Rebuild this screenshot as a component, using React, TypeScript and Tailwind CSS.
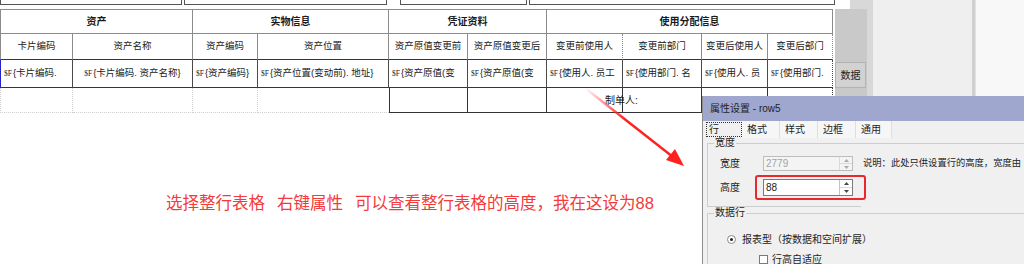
import React from 'react';

const cols = 'grid grid-cols-[73px_120px_65px_131px_79px_79px_76px_79px_66px_65px]';

const groups = [
  { name: '资产', span: 'col-span-2 border-l' },
  { name: '实物信息', span: 'col-span-2' },
  { name: '凭证资料', span: 'col-span-2' },
  { name: '使用分配信息', span: 'col-span-4' },
];

const heads = ['卡片编码', '资产名称', '资产编码', '资产位置', '资产原值变更前', '资产原值变更后', '变更前使用人', '变更前部门', '变更后使用人', '变更后部门'];

// 数据行里看得到的字段（截断部分保持截图样子）
const fields: { text: string; center?: boolean }[] = [
  { text: '卡片编码.' },
  { text: '卡片编码. 资产名称}', center: true },
  { text: '资产编码}' },
  { text: '资产位置(变动前). 地址}' },
  { text: '资产原值(变' },
  { text: '资产原值(变' },
  { text: '使用人. 员工' },
  { text: '使用部门. 名' },
  { text: '使用人. 员' },
  { text: '使用部门.' },
];

const TopStrip = () => (
  <div className="h-[9px] flex items-start">
    <div className="w-[182px] h-[5px] border-x border-b border-[#555]" />
    <div className="w-[203px] h-[5px] ml-[2px] border-x border-b border-[#555]" />
    <div className="w-[127px] h-[5px] ml-[13px] border-x border-b border-[#555]" />
    <div className="w-[306px] h-[5px] ml-[2px] border-x border-b border-[#555]" />
  </div>
);

const Table = () => (
  <div className={`${cols} w-[834px] text-[#1a1a1a]`}>
    {groups.map((g) => (
      <div
        key={g.name}
        className={`${g.span} h-[25px] border-t border-r border-b border-[#8c8c8c] flex items-center justify-center text-[10px] font-bold`}
      >
        {g.name}
      </div>
    ))}

    {heads.map((h, i) => (
      <div
        key={h}
        className={`h-[26px] border-r border-b border-r-[#8c8c8c] border-b-[#2323c8] flex items-center justify-center text-[9.5px] whitespace-nowrap overflow-hidden ${
          i === 0 ? 'border-l border-l-[#8c8c8c]' : ''
        } ${i === 6 || i === 9 ? '[border-right-style:dotted]' : ''}`}
      >
        {h}
      </div>
    ))}

    {fields.map((f, i) => (
      <div
        key={i}
        className={`h-[28px] border-r border-b border-r-[#4a4a4a] border-b-[#2323c8] flex items-center text-[9.5px] whitespace-nowrap overflow-hidden ${
          f.center ? 'justify-center' : 'pl-[3px]'
        } ${i === 0 ? 'border-l border-l-[#2323c8]' : ''} ${i === 9 ? '[border-right-style:dotted]' : ''}`}
      >
        <span className="text-[7.5px] font-['Liberation_Serif',serif] mr-[1px]">$F</span>
        {'{' + f.text}
      </div>
    ))}

    <div className="h-[25px] border-l border-r border-b border-dotted border-[#cfcfcf]" />
    <div className="h-[25px] border-r border-b border-dotted border-[#cfcfcf]" />
    <div className="h-[25px] border-r border-b border-dotted border-[#cfcfcf]" />
    <div className="h-[25px] border-b border-dotted border-[#cfcfcf]" />
    <div className="h-[25px] border-l border-r border-b border-[#333]" />
    <div className="h-[25px] border-r border-b border-[#333]" />
    <div className="h-[25px] border-r border-b border-[#333] flex items-center pl-[58px] text-[10px] whitespace-nowrap">
      制单人:
    </div>
    <div className="h-[25px] border-r border-b border-[#333]" />
    <div className="h-[25px] border-r border-b border-[#333]" />
    <div className="h-[25px] border-r border-b border-[#333] [border-right-style:dotted]" />
  </div>
);

const Arrows = ({ dark }: { dark: boolean }) => (
  <div className={`w-[13px] flex flex-col border-l ${dark ? 'border-[#c4c4c4]' : 'border-[#dadada]'}`}>
    <div className="flex-1 flex items-center justify-center border-b border-[#dadada]">
      <svg width="5" height="3" viewBox="0 0 5 3">
        <path d="M2.5 0 L5 3 L0 3 Z" fill={dark ? '#444' : '#aaa'} />
      </svg>
    </div>
    <div className="flex-1 flex items-center justify-center">
      <svg width="5" height="3" viewBox="0 0 5 3">
        <path d="M0 0 L5 0 L2.5 3 Z" fill={dark ? '#444' : '#aaa'} />
      </svg>
    </div>
  </div>
);

const Dialog = () => (
  <div className="absolute left-[702px] top-[96px] w-[322px] h-[168px] bg-[#f0f0f0] border-l border-[#8f8f8f] text-[10px] text-[#1e1e1e] flex flex-col">
    <div className="h-[25px] bg-[#9fa7cf] flex items-center pl-[7px] shrink-0">属性设置 - row5</div>

    <div className="h-[17px] flex pl-[3px] shrink-0">
      <div className="w-[36px] mt-[1px] h-[15px] border border-dotted border-[#333] flex items-center pl-[2px]">行</div>
      <div className="w-[38px] bg-[#f6f6f6] border-r border-[#dedede] flex items-center pl-[5px]">格式</div>
      <div className="w-[38px] bg-[#f6f6f6] border-r border-[#dedede] flex items-center pl-[5px]">样式</div>
      <div className="w-[38px] bg-[#f6f6f6] border-r border-[#dedede] flex items-center pl-[5px]">边框</div>
      <div className="w-[36px] bg-[#f6f6f6] border-r border-[#dedede] flex items-center pl-[5px]">通用</div>
    </div>

    {/* 宽度 分组 */}
    <div className="relative mt-[5px] ml-[4px] h-[63px] border-t border-l border-[#cdcdcd] pt-[12px] shrink-0">
      <span className="absolute -top-[7px] left-[6px] bg-[#f0f0f0] px-[1px] leading-[12px]">宽度</span>
      <div className="flex items-center h-[15px]">
        <span className="ml-[12px] w-[20px] shrink-0 whitespace-nowrap">宽度</span>
        <div className="ml-[23px] w-[90px] h-[15px] shrink-0 border border-[#bdbdbd] bg-[#f4f4f4] flex">
          <span className="flex-1 pl-[2px] flex items-center text-[#a3a3a3]">2779</span>
          <Arrows dark={false} />
        </div>
        <span className="ml-[10px] text-[9.3px] whitespace-nowrap">说明：此处只供设置行的高度，宽度由</span>
      </div>
      <div className="flex items-center mt-[4px]">
        <span className="ml-[12px] w-[20px] shrink-0 whitespace-nowrap">高度</span>
        <div className="ml-[15px] shrink-0 border-2 border-[#e8282a] rounded-[3px] pl-[6px] pr-[11px] py-[2px]">
          <div className="w-[90px] h-[17px] border border-[#7a7a7a] bg-white flex">
            <span className="flex-1 pl-[2px] flex items-center text-[#222]">88</span>
            <Arrows dark />
          </div>
        </div>
      </div>
    </div>
    <div className="ml-[4px] w-[154px] border-t border-[#cdcdcd] shrink-0" />

    {/* 数据行 分组 */}
    <div className="relative mt-[6px] ml-[4px] flex-1 border-t border-l border-[#cdcdcd]">
      <span className="absolute -top-[7px] left-[6px] bg-[#f0f0f0] px-[1px] leading-[12px]">数据行</span>
      <div className="flex items-center mt-[19px] ml-[19px] h-[12px]">
        <span className="w-[9px] h-[9px] rounded-full border border-[#8a8a8a] bg-white flex items-center justify-center">
          <span className="w-[3px] h-[3px] rounded-full bg-[#222]" />
        </span>
        <span className="ml-[6px] whitespace-nowrap">报表型（按数据和空间扩展）</span>
      </div>
      <div className="flex items-center mt-[8px] ml-[51px] h-[12px]">
        <span className="w-[9px] h-[9px] border border-[#7a7a7a] bg-white" />
        <span className="ml-[4px]">行高自适应</span>
      </div>
    </div>
  </div>
);

const RedArrow = () => (
  <svg className="absolute left-0 top-0 pointer-events-none" width="1024" height="264" viewBox="0 0 1024 264">
    <defs>
      <linearGradient id="fade" gradientUnits="userSpaceOnUse" x1="585" y1="88" x2="625" y2="119">
        <stop offset="0" stopColor="#ff2020" stopOpacity="0" />
        <stop offset="1" stopColor="#ff2020" stopOpacity="1" />
      </linearGradient>
    </defs>
    <line x1="585" y1="88" x2="673" y2="157" stroke="url(#fade)" strokeWidth="2.4" />
    <path d="M684 166 L666 160 L675 149 Z" fill="#ff2020" />
  </svg>
);

const SidePanel = () => (
  <div className="flex flex-1 h-full">
    <div className="w-[38px] flex flex-col">
      <div className="h-[9px] flex">
        <div className="w-[15px] bg-white" />
        <div className="flex-1 bg-[#d8d8d8]" />
      </div>
      <div className="flex-1 flex">
        <div className="w-[32px] bg-[#c9c9c9] pt-[53px]">
          <div className="w-[31px] h-[26px] bg-[#d2d2d2] border border-[#b3b3b3] flex items-center justify-center text-[10px] text-[#222]">
            数据
          </div>
        </div>
        <div className="flex-1 bg-[#d8d8d8]" />
      </div>
    </div>
    <div className="w-[99px] bg-[#efefef]" />
    <div className="w-[4px] bg-[#d0d0d0] border-r border-[#e2e2e2]" />
    <div className="flex-1 bg-[#f8f8f8]" />
  </div>
);

const App: React.FC = () => {
  return (
    <div className="relative w-[1024px] h-[264px] overflow-hidden bg-white flex font-['Liberation_Sans','Noto_Sans_CJK_SC',sans-serif]">
      <div className="w-[835px] flex flex-col shrink-0">
        <TopStrip />
        <Table />
        <div className="mt-[80px] pl-[166px] flex gap-[12px] text-[16.5px] leading-[20px] text-[#f43a3a] whitespace-nowrap">
          <span>选择整行表格</span>
          <span>右键属性</span>
          <span>可以查看整行表格的高度，我在这设为88</span>
        </div>
      </div>
      <SidePanel />
      <RedArrow />
      <Dialog />
    </div>
  );
};

export default App;
